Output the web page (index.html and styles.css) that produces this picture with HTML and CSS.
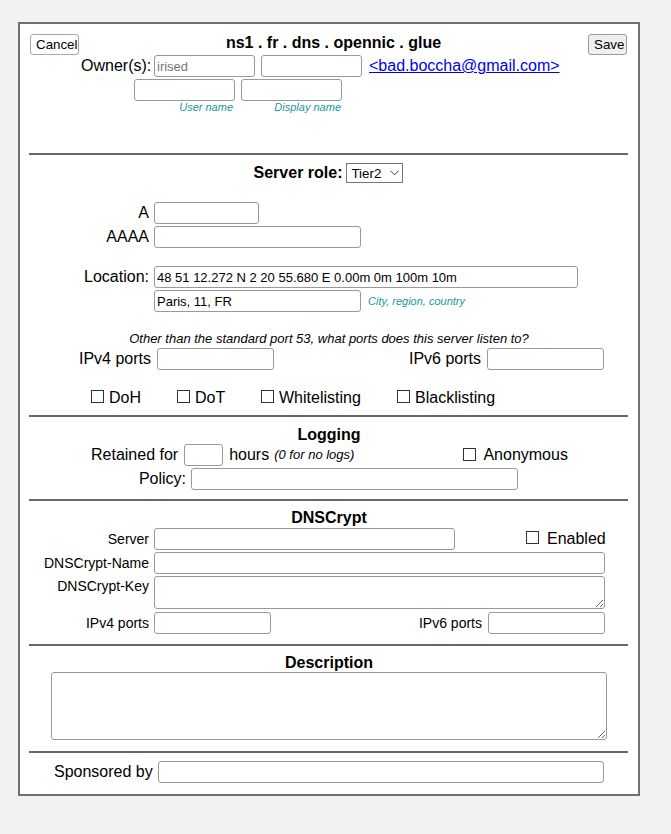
FILE: index.html
```html
<!DOCTYPE html>
<html lang="en">
<head>
<meta charset="utf-8">
<title>ns1 . fr . dns . opennic . glue</title>
<link rel="stylesheet" href="styles.css">
</head>
<body>
<div class="panel">
  <div class="head">
    <button class="btn cancel">Cancel</button>
    <div class="title">ns1 . fr . dns . opennic . glue</div>
    <button class="btn save">Save</button>
  </div>
  <div class="owner-row">
    <span class="owner-lbl">Owner(s):</span>
    <input class="in w101 o1" placeholder="irised">
    <input class="in w101 o2">
    <a href="#" class="mail">&lt;bad.boccha@gmail.com&gt;</a>
  </div>
  <div class="owner-row2">
    <input class="in w101">
    <input class="in w101 o2">
  </div>
  <div class="owner-hints">
    <span class="hint hcol">User name</span>
    <span class="hint hcol hcol2">Display name</span>
  </div>

  <div class="rule rule-1"></div>

  <div class="role-row">
    <span class="bold">Server role:</span>
    <span class="sel-wrap">
      <select class="sel"><option>Tier2</option><option>Tier1</option></select>
      <svg class="chev" width="9" height="6" viewBox="0 0 9 6"><path d="M0.5 0.8 L4.5 4.8 L8.5 0.8" fill="none" stroke="#333" stroke-width="1"/></svg>
    </span>
  </div>

  <div class="grid addr">
    <span class="glbl">A</span><input class="in w105">
    <span class="glbl">AAAA</span><input class="in w207">
  </div>

  <div class="grid loc">
    <span class="glbl">Location:</span><input class="in w424 locin" value="48 51 12.272 N 2 20 55.680 E 0.00m 0m 100m 10m">
    <span></span>
    <div class="fieldline"><input class="in w207" value="Paris, 11, FR"><span class="hint city">City, region, country</span></div>
  </div>

  <div class="note">Other than the standard port 53, what ports does this server listen to?</div>

  <div class="ports-row">
    <span class="p4lbl">IPv4 ports</span><input class="in w117 pin">
    <span class="p6lbl">IPv6 ports</span><input class="in w117 pin">
  </div>

  <div class="checks">
    <label class="chk"><input type="checkbox" class="cb"><span>DoH</span></label>
    <label class="chk"><input type="checkbox" class="cb"><span>DoT</span></label>
    <label class="chk"><input type="checkbox" class="cb"><span>Whitelisting</span></label>
    <label class="chk"><input type="checkbox" class="cb"><span>Blacklisting</span></label>
  </div>

  <div class="rule rule-2"></div>

  <div class="sec-title t-log">Logging</div>
  <div class="ret-row">
    <span class="ret-lbl">Retained for</span>
    <input class="in w39 ret-in">
    <span class="hours">hours</span>
    <span class="nologs">(0 for no logs)</span>
    <label class="chk anon"><input type="checkbox" class="cb"><span>Anonymous</span></label>
  </div>
  <div class="policy-row">
    <span class="pol-lbl">Policy:</span>
    <input class="in w327">
  </div>

  <div class="rule rule-3"></div>

  <div class="sec-title t-dns">DNSCrypt</div>
  <div class="grid dns">
    <span class="dlbl">Server</span>
    <div class="fieldline">
      <input class="in w301">
      <label class="chk enabled"><input type="checkbox" class="cb"><span>Enabled</span></label>
    </div>
    <span class="dlbl">DNSCrypt-Name</span>
    <input class="in w451">
    <span class="dlbl top">DNSCrypt-Key</span>
    <textarea class="ta key"></textarea>
    <span class="dlbl last">IPv4 ports</span>
    <div class="fieldline last">
      <input class="in w117">
      <span class="dlbl6">IPv6 ports</span>
      <input class="in w117">
    </div>
  </div>

  <div class="rule rule-4"></div>

  <div class="sec-title t-desc">Description</div>
  <textarea class="ta desc"></textarea>

  <div class="rule rule-5"></div>

  <div class="sponsor-row">
    <span class="sp-lbl">Sponsored by</span>
    <input class="in w446">
  </div>
</div>
</body>
</html>
```
FILE: styles.css
```css
* { box-sizing: border-box; }
html, body { margin: 0; padding: 0; }
body {
  background: #f2f2f2;
  font-family: "Liberation Sans", Arial, sans-serif;
  font-size: 16px;
  color: #000;
}
.panel {
  margin: 22px 0 0 18px;
  width: 622px;
  background: #fff;
  border: 2px solid #707070;
  padding: 10px 10px 11px 9px;
}
.head {
  display: flex;
  align-items: flex-start;
  height: 21px;
}
.btn {
  font-family: "Liberation Sans", Arial, sans-serif;
  font-size: 13.33px;
  height: 21px;
  padding: 0 5px;
  border: 1px solid #a8a8a8;
  border-radius: 3px;
  color: #000;
  line-height: 19px;
}
.cancel { margin-left: 1px; width: 49px; background: #fff; }
.save { margin-right: 1px; width: 39px; background: #efefef; border-color: #9a9a9a; }
.title {
  flex: 1;
  text-align: center;
  font-weight: bold;
  font-size: 16px;
  line-height: 18px;
}
.in {
  height: 22px;
  border: 1px solid #999;
  border-radius: 3px;
  background: #fff;
  padding: 0 2px;
  font-family: "Liberation Sans", Arial, sans-serif;
  font-size: 13px;
  color: #000;
  margin: 0;
  outline: none;
}
.in::placeholder { color: #777; }
.w39 { width: 39px; }
.w101 { width: 101px; }
.w105 { width: 105px; }
.w117 { width: 117px; }
.w207 { width: 207px; }
.w301 { width: 301px; }
.w327 { width: 327px; }
.w424 { width: 424px; }
.w446 { width: 446px; }
.w451 { width: 451px; }

.owner-row {
  display: flex;
  align-items: center;
  height: 22px;
  margin-left: 52px;
}
.owner-lbl { width: 70px; text-align: right; line-height: 18px; white-space: nowrap; }
.o1 { margin-left: 3px; }
.o2 { margin-left: 6px; }
.mail { margin-left: 7px; color: #0000ee; text-decoration: underline; line-height: 18px; }
.owner-row2 {
  display: flex;
  margin-top: 2px;
  height: 22px;
  margin-left: 105px;
}
.owner-hints {
  display: flex;
  margin-left: 105px;
  height: 13px;
}
.hint {
  color: #17999a;
  font-style: italic;
  font-size: 11px;
  line-height: 13px;
}
.hcol { width: 101px; text-align: right; padding-right: 2px; display: block; }
.hcol2 { margin-left: 6px; padding-right: 1px; }

.rule { border-top: 2px solid #686868; height: 0; }
.rule-1 { margin-top: 39px; }
.rule-2 { margin-top: 8px; }
.rule-3 { margin-top: 9px; }
.rule-4 { margin-top: 10px; }
.rule-5 { margin-top: 11px; }

.bold { font-weight: bold; }
.role-row {
  margin-top: 8px;
  height: 20px;
  display: flex;
  justify-content: center;
  align-items: center;
  gap: 4px;
  line-height: 18px;
}
.sel-wrap { position: relative; display: block; width: 57px; height: 20px; }
.sel {
  appearance: none;
  -webkit-appearance: none;
  width: 57px;
  height: 20px;
  border: 1px solid #767676;
  border-radius: 0;
  background: #fff;
  font-family: "Liberation Sans", Arial, sans-serif;
  font-size: 13.33px;
  padding: 0 0 0 4px;
  margin: 0;
  color: #000;
  display: block;
}
.chev { position: absolute; left: 44px; top: 7px; pointer-events: none; }

.grid {
  display: grid;
  grid-template-columns: 120px auto;
  column-gap: 5px;
  row-gap: 2px;
  align-items: center;
  justify-items: start;
}
.glbl { justify-self: end; line-height: 18px; }
.addr { margin-top: 19px; }
.loc { margin-top: 18px; }
.fieldline { display: flex; align-items: center; }
.city { margin-left: 7px; }
.note {
  margin-top: 20px;
  text-align: center;
  font-size: 13px;
  font-style: italic;
  line-height: 14px;
  padding-left: 1px;
}
.ports-row {
  margin-top: 2px;
  display: flex;
  align-items: center;
  height: 22px;
}
.p4lbl { width: 122px; text-align: right; }
.p6lbl { width: 207px; text-align: right; }
.pin { margin-left: 6px; }

.checks {
  margin-top: 19px;
  margin-left: 62px;
  display: grid;
  grid-template-columns: 86px 84px 136px auto;
  height: 18px;
}
.chk { display: flex; align-items: flex-start; line-height: 18px; white-space: nowrap; }
.cb {
  appearance: none;
  -webkit-appearance: none;
  width: 13px;
  height: 13px;
  border: 1px solid #333;
  border-radius: 0;
  background: #fff;
  margin: 1px 5px 0 0;
  flex: none;
}

.sec-title {
  text-align: center;
  font-weight: bold;
  line-height: 18px;
  padding-left: 1px;
}
.t-log { margin-top: 9px; }
.t-dns { margin-top: 8px; }
.t-desc { margin-top: 8px; }

.ret-row {
  display: flex;
  align-items: center;
  height: 22px;
  margin-left: 62px;
  line-height: 18px;
  white-space: nowrap;
}
.ret-in { margin-left: 6px; }
.hours { margin-left: 6px; }
.nologs { margin-left: 5px; font-size: 13px; font-style: italic; }
.anon { margin-left: 109px; }
.anon .cb { margin: 2px 7px 0 0; width: 13px; height: 13px; }
.policy-row {
  margin-top: 2px;
  display: flex;
  align-items: center;
  height: 22px;
}
.pol-lbl { width: 157px; text-align: right; margin-right: 5px; line-height: 18px; }

.dns { margin-top: 1px; }
.dlbl { justify-self: end; font-size: 14px; line-height: 16px; white-space: nowrap; }
.dlbl.top { align-self: start; padding-top: 2px; }
.dlbl.last, .fieldline.last { margin-top: 1px; }
.enabled { margin-left: 71px; }
.enabled .cb { margin-right: 8px; }
.dlbl6 { width: 217px; text-align: right; font-size: 14px; line-height: 16px; padding-right: 6px; }
.ta {
  display: block;
  border: 1px solid #999;
  border-radius: 3px;
  background: #fff;
  margin: 0;
  padding: 2px;
  font-family: "Liberation Sans", Arial, sans-serif;
  font-size: 13px;
  outline: none;
}
.key { width: 451px; height: 33px; }
.desc { width: 556px; height: 68px; margin-left: 22px; }

.sponsor-row {
  margin-top: 8px;
  display: flex;
  align-items: center;
  height: 22px;
  margin-left: 25px;
}
.sp-lbl { white-space: nowrap; margin-right: 5px; line-height: 18px; }
```
